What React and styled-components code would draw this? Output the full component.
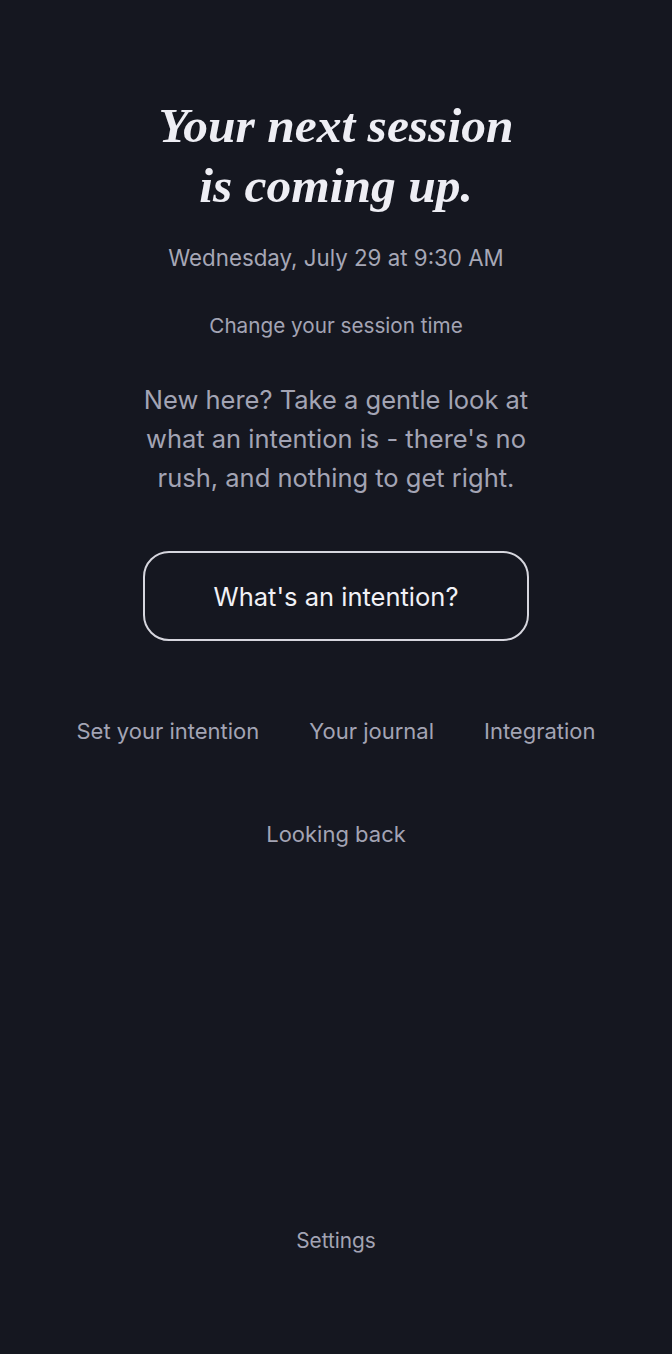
import styled, { createGlobalStyle } from "styled-components";

const Global = createGlobalStyle`
  html, body {
    margin: 0;
    padding: 0;
    background: #151720;
  }
  body {
    font-family: Inter, "Noto Sans", sans-serif;
    -webkit-font-smoothing: antialiased;
  }
`;

const Page = styled.main`
  min-height: 1354px;
  box-sizing: border-box;
  display: flex;
  flex-direction: column;
  align-items: center;
  padding: 96px 24px 98px;
  color: #a3a4b4;
  text-align: center;
`;

const Title = styled.h1`
  margin: 0;
  font-family: "Liberation Serif", "DejaVu Serif", serif;
  font-style: italic;
  font-weight: 700;
  font-size: 49.5px;
  line-height: 60px;
  color: #eeeef4;
`;

const When = styled.p`
  margin: 27px 0 0;
  font-size: 22.3px;
  line-height: 30px;
  color: #a6a7b6;
`;

const TextLink = styled.a`
  display: block;
  font-size: ${(p) => p.size || 20}px;
  line-height: 30px;
  color: #a3a4b4;
  text-decoration: none;
  cursor: pointer;
`;

const ChangeLink = styled(TextLink)`
  margin-top: 38px;
`;

const Intro = styled.p`
  margin: 39px 0 0;
  max-width: 410px;
  font-size: 25.5px;
  line-height: 39px;
  color: #a3a4b4;
`;

const Button = styled.button`
  margin-top: 54px;
  width: 386px;
  height: 90px;
  border: 2px solid #d6d6de;
  border-radius: 26px;
  background: transparent;
  color: #f1f1f6;
  font-family: inherit;
  font-size: 25.5px;
  cursor: pointer;
`;

const Nav = styled.nav`
  margin-top: 75px;
  width: 540px;
  display: flex;
  flex-wrap: wrap;
  justify-content: center;
  column-gap: 50px;
  row-gap: 73px;
`;

const Footer = styled.footer`
  margin-top: auto;
`;

export default function App() {
  return (
    <>
      <Global />
      <Page>
        <Title>
          Your next session
          <br />
          is coming up.
        </Title>
        <When>Wednesday, July 29 at 9:30 AM</When>
        <ChangeLink size={20.7}>Change your session time</ChangeLink>
        <Intro>
          New here? Take a gentle look at what an intention is - there's no
          rush, and nothing to get right.
        </Intro>
        <Button>What's an intention?</Button>
        <Nav>
          <TextLink size={22}>Set your intention</TextLink>
          <TextLink size={22}>Your journal</TextLink>
          <TextLink size={22}>Integration</TextLink>
          <TextLink size={22}>Looking back</TextLink>
        </Nav>
        <Footer>
          <TextLink size={20.8}>Settings</TextLink>
        </Footer>
      </Page>
    </>
  );
}
